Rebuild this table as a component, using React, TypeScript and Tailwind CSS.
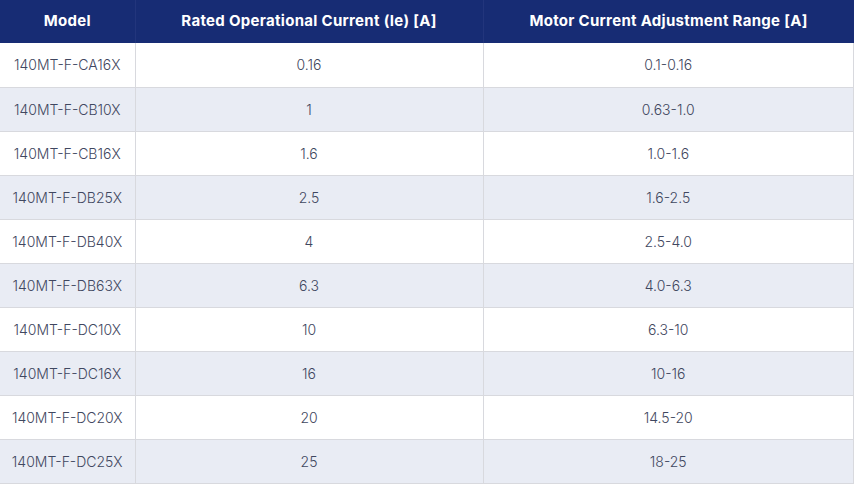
const rows = [
  ["140MT-F-CA16X", "0.16", "0.1-0.16"],
  ["140MT-F-CB10X", "1", "0.63-1.0"],
  ["140MT-F-CB16X", "1.6", "1.0-1.6"],
  ["140MT-F-DB25X", "2.5", "1.6-2.5"],
  ["140MT-F-DB40X", "4", "2.5-4.0"],
  ["140MT-F-DB63X", "6.3", "4.0-6.3"],
  ["140MT-F-DC10X", "10", "6.3-10"],
  ["140MT-F-DC16X", "16", "10-16"],
  ["140MT-F-DC20X", "20", "14.5-20"],
  ["140MT-F-DC25X", "25", "18-25"],
];

export default function App() {
  return (
    <div className="w-[854px] h-[486px] bg-white font-['Inter','Open_Sans',sans-serif]">
      <table className="w-[854px] table-fixed border-collapse text-[14px]">
        <colgroup>
          <col className="w-[135px]" />
          <col className="w-[348px]" />
          <col />
        </colgroup>
        <thead>
          <tr className="h-[43px] bg-[#172c74] text-white text-[15px] tracking-[0.02em]">
            <th className="font-bold text-center border-r border-[#22357c]">Model</th>
            <th className="font-bold text-center border-r border-[#22357c]">Rated Operational Current (Ie) [A]</th>
            <th className="font-bold text-center">Motor Current Adjustment Range [A]</th>
          </tr>
        </thead>
        <tbody>
          {rows.map((r, i) => (
            <tr
              key={r[0]}
              className={`h-[44px] border-b border-[#d8d9de] ${i % 2 === 1 ? "bg-[#e9ecf4]" : "bg-white"}`}
            >
              <td className="text-center font-light text-[#3f4760] border-r border-[#d8d9de]">{r[0]}</td>
              <td className="text-center font-light text-[#3f4760] border-r border-[#d8d9de]">{r[1]}</td>
              <td className="text-center font-light text-[#3f4760] border-r border-[#d8d9de]">{r[2]}</td>
            </tr>
          ))}
        </tbody>
      </table>
    </div>
  );
}
